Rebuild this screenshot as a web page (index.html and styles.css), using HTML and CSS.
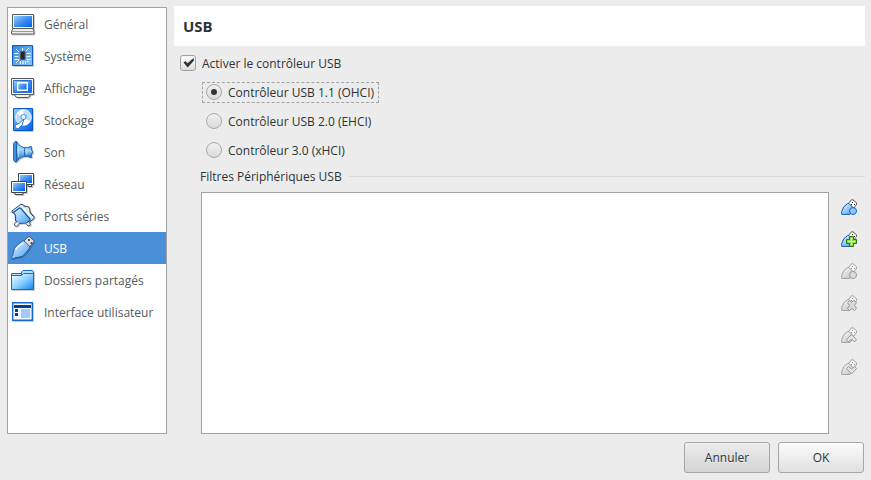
FILE: index.html
```html
<!DOCTYPE html>
<html lang="fr">
<head>
<meta charset="utf-8">
<title>Configuration</title>
<link rel="stylesheet" href="styles.css">
</head>
<body>
<svg class="defs" width="0" height="0" aria-hidden="true">
  <defs>
    <linearGradient id="screen" x1="0" y1="0" x2="1" y2="1"><stop offset="0" stop-color="#9bceff"/><stop offset=".5" stop-color="#3d8ff0"/><stop offset="1" stop-color="#0560ea"/></linearGradient>
    <linearGradient id="sky" x1="0" y1="0" x2="1" y2="1"><stop offset="0" stop-color="#e2f2ff"/><stop offset="1" stop-color="#4c9ff0"/></linearGradient>
    <linearGradient id="chip" x1="0" y1="0" x2="1" y2="1"><stop offset="0" stop-color="#2f86e0"/><stop offset="1" stop-color="#8cc8fa"/></linearGradient>
    <linearGradient id="folder" x1="0" y1="0" x2="1" y2="1"><stop offset="0" stop-color="#fff"/><stop offset=".5" stop-color="#8fd4ff"/><stop offset="1" stop-color="#0f82f0"/></linearGradient>
    <linearGradient id="horn" x1="0" y1="0" x2="0" y2="1"><stop offset="0" stop-color="#5aa3e6"/><stop offset=".4" stop-color="#a4d6fc"/><stop offset="1" stop-color="#0c5cb8"/></linearGradient>
    <linearGradient id="gray" x1="0" y1="0" x2="1" y2="1"><stop offset="0" stop-color="#f4f4f4"/><stop offset="1" stop-color="#c4c4c4"/></linearGradient>
    <g id="plug-blue">
      <path d="M7.500 4.500 10.500 .8h1.500l3.500 3v1.700l-3 4z" fill="#fff" stroke="#555"/>
      <path d="M11 3h1v1h-1zM13 5h1v1h-1zM10 5h1v1h-1z" fill="#222"/>
      <path d="M.7 15.400V12.500Q2 7 6.500 4.500h1.500l4.500 4.500v2.500l-3.500 3.900z" fill="url(#sky)" stroke="#1259ae"/>
    </g>
    <g id="plug-gray">
      <path d="M7.500 4.500 10.500 .8h1.500l3.500 3v1.700l-3 4z" fill="#f4f4f4" stroke="#a0a0a0"/>
      <path d="M11 3h1v1h-1zM13 5h1v1h-1zM10 5h1v1h-1z" fill="#888"/>
      <path d="M.7 15.400V12.500Q2 7 6.500 4.500h1.500l4.500 4.500v2.500l-3.500 3.900z" fill="url(#gray)" stroke="#a0a0a0"/>
    </g>
  </defs>
</svg>

<div class="dialog">
  <div class="content">
    <nav class="sidebar">
      <a class="item">
        <svg class="icon" viewBox="0 0 24 24"><path d="M1.500 2.500h21v14h-21z" fill="#f8f8f8" stroke="#555"/><path d="M3 4h18v11H3z" fill="url(#screen)"/><path d="M2 16.500h20l1 3v2.500H.5v-2.500z" fill="#f0eeec" stroke="#5c5955"/><path d="M1 19.500h21.500" stroke="#a09a94"/></svg>
        <span>Général</span></a>
      <a class="item">
        <svg class="icon" viewBox="0 0 24 24"><path d="M1.500 1.500h20v20h-20z" fill="url(#chip)" stroke="#1059b8"/><path d="M3.500 9.500h4m-4 3h4m-4 3h4m8-6h4m-4 3h4m-4 3h4M9.500 17v3m2.500-3v3m2.500-3v3M5 5l3 3M15 7l3-3M11.500 4v2.500M5 19l3-3M18 18l-2-1" stroke="#fff"/><path d="M9.500 7.500h4.500v8H9.500z" fill="#262626" stroke="#555"/></svg>
        <span>Système</span></a>
      <a class="item">
        <svg class="icon" viewBox="0 0 24 24"><path d="M.5 2.500h22v16H.5z" fill="#f4f4f4" stroke="#555"/><path d="M2.500 4.500h18v12h-18z" fill="url(#screen)" stroke="#2470d6"/><path d="M6.700 6.700h9.600v7.600H6.700z" fill="url(#screen)" stroke="#fff" stroke-width="1.400"/><path d="M4 18.500h15v1.500l-2 1.500H6L4 20z" fill="#eee" stroke="#5c5955"/></svg>
        <span>Affichage</span></a>
      <a class="item">
        <svg class="icon" viewBox="0 0 24 24"><path d="M2.500.5h19v22h-19z" fill="url(#screen)" stroke="#0757bd"/><circle cx="12.500" cy="9.500" r="7.800" fill="#b9dcfb" stroke="#e9f5ff"/><path d="M12.500 9.500 6 5.500a8 8 0 0 1 6.500-3.800zM12.500 9.500l6.500 4a8 8 0 0 1-6.500 3.800z" fill="#fff"/><circle cx="12.500" cy="9" r="2.600" fill="#eef7ff" stroke="#4a8fd2"/><path d="m13 11-2 6-3.500 3.500-3.500-.5.500-3 4-2z" fill="#fff" stroke="#2779cc" stroke-width=".9"/></svg>
        <span>Stockage</span></a>
      <a class="item">
        <svg class="icon" viewBox="0 0 24 24"><path d="M11.500 7.500h7v-1h2v4h1v3h-1v4h-2v-1h-7z" fill="url(#horn)" stroke="#1762b1" stroke-width=".8"/><path d="M5.500 1.500q1.500 4 8 6.500v8q-6.500 2.500-8 6z" fill="url(#horn)" stroke="#1461b4" stroke-width=".8"/><path d="M2.500 3.500 4 1.500h1.500v20.500H4L2.500 20z" fill="#3f8fdd" stroke="#1259a8" stroke-width=".8"/><path d="M7.500 6v11M16 8v7" stroke="#c9e7ff" opacity=".7"/></svg>
        <span>Son</span></a>
      <a class="item">
        <svg class="icon" viewBox="0 0 24 24"><path d="M7.500 1.500h15v11h-15z" fill="#fff" stroke="#444"/><path d="M9 3h12v8H9z" fill="url(#screen)"/><path d="M17 12.500h3l1 2h-4z" fill="#eee" stroke="#444"/><path d="M.5 9.500h15v11H.5z" fill="#fff" stroke="#444"/><path d="M2 11h12v8H2z" fill="url(#screen)"/><path d="M4 20.500h8v2H4z" fill="#eee" stroke="#444"/></svg>
        <span>Réseau</span></a>
      <a class="item">
        <svg class="icon" viewBox="0 0 24 24"><path d="M1 8.500V7l8.500-6.500H12L23 12.500v2L18.500 18H17L4 8z" fill="#d4eaff" stroke="#26476d"/><path d="M12.500 2 18 3l1.500 6 3 3.500" fill="#e8e8e8" stroke="#444"/><path d="m2.500 8.500 6-4.500 1.500.5 9 10.500v1.500l-3.500 2.500-8 .5-3-3v-5z" fill="url(#sky)" stroke="#0e59ac" stroke-width="1.200"/><path d="m6 17.500-2.500 2v2l2 1 3-2.500M15 19.500l2 2.500 2.500-1-1-3" fill="#eee" stroke="#555"/><path d="m12.500 4.500 8 8.500" stroke="#fff" stroke-width="1.300"/></svg>
        <span>Ports séries</span></a>
      <a class="item selected">
        <svg class="icon" viewBox="0 0 24 24"><path d="m12.500 5.500 4.500-4.500q1-.8 2 0l3.500 3.500q.8 1 0 2l-4.500 5z" fill="#e2e2e2" stroke="#54616e"/><path d="M17 3h2v2h-2zM19.500 6h2v2h-2z" fill="#555"/><path d="M.8 22.700V20.500q1.500-1.500 1.500-4 0-4 4-7.500l5-4q1.200-.6 2.500.5l4.500 4.500q1 1.300 0 2.500l-4 5q-3 3.800-7 3.800-3 0-5 1.400z" fill="url(#sky)" stroke="#195ca8"/><path d="M4.500 14q2-4 8-7" fill="none" stroke="#e9f6ff" stroke-width="1.600"/></svg>
        <span>USB</span></a>
      <a class="item">
        <svg class="icon" viewBox="0 0 24 24"><path d="M10.500 7V4L12 2.500h9.500l1 1.500v17H.5V5.500h10z" fill="#b4defd" stroke="#1370c8"/><path d="M.5 7.500h10l2-2h10v16H.5z" fill="url(#folder)" stroke="#0f6fca"/></svg>
        <span>Dossiers partagés</span></a>
      <a class="item">
        <svg class="icon" viewBox="0 0 24 24"><path d="M1.700 2.700h19.600v17.600H1.700z" fill="#f7fbff" stroke="#1369cf" stroke-width="1.400"/><path d="M3 5h17v3H3z" fill="#053e95"/><path d="M10 9h9v9h-9z" fill="#9fc9ff"/><path d="M4 9h3v3H4zM4 13h3v3H4z" fill="#053e95"/></svg>
        <span>Interface utilisateur</span></a>
    </nav>

    <main class="page">
      <h1 class="title">USB</h1>
      <label class="enable"><span class="checkbox"><svg viewBox="0 0 14 14"><path d="M2.500 6.500 4.500 5l2 2.200L12.500 2l.5 2.500-6.300 7z" fill="#2e3436"/></svg></span>Activer le contrôleur USB</label>
      <div class="radios">
        <label class="option focused"><span class="radio checked"></span>Contrôleur USB 1.1 (OHCI)</label>
        <label class="option"><span class="radio"></span>Contrôleur USB 2.0 (EHCI)</label>
        <label class="option"><span class="radio"></span>Contrôleur 3.0 (xHCI)</label>
      </div>
      <h2 class="group"><span>Filtres Périphériques USB</span></h2>
      <div class="filters">
        <div class="list"></div>
        <div class="tools">
          <svg viewBox="0 0 16 16"><use href="#plug-blue"/><circle cx="12" cy="12" r="3.500" fill="#91c6fb" stroke="#1766ca"/></svg>
          <svg viewBox="0 0 16 16"><use href="#plug-blue"/><path d="M8.500 5.500h4v3h3v4h-3v3h-4v-3h-3v-4h3z" fill="#8edb50" stroke="#25780b"/><path d="M10.500 7v7M7 10.500h7" stroke="#d6ffab"/></svg>
          <svg viewBox="0 0 16 16"><use href="#plug-gray"/><circle cx="12" cy="12" r="3.500" fill="#dedede" stroke="#999"/></svg>
          <svg viewBox="0 0 16 16"><use href="#plug-gray"/><path d="m6.500 7.500 2-2 2 2 2-2 3 2-2 3 2 3-2 2-3-2-2 2-2-2 2-3z" fill="#d8d8d8" stroke="#999"/></svg>
          <svg viewBox="0 0 16 16"><use href="#plug-gray"/><path d="m5.500 12.500 5-5 5 5-2 2.500-3-3-3 3z" fill="#e2e2e2" stroke="#999"/></svg>
          <svg viewBox="0 0 16 16"><use href="#plug-gray"/><path d="m5.500 9.500 2-2 3 2.500 3-2.500 2 2-5 5.500z" fill="#e2e2e2" stroke="#999"/></svg>
        </div>
      </div>
    </main>
  </div>
  <footer class="buttons">
    <button class="button cancel">Annuler</button>
    <button class="button">OK</button>
  </footer>
</div>
</body>
</html>
```
FILE: styles.css
```css
* { box-sizing: border-box; }
body {
  margin: 0;
  background: #ececec;
  color: #2e3436;
  font: 12px/16px "Open Sans", "Noto Sans", sans-serif;
}
.defs { display: block; }
.dialog {
  width: 871px;
  height: 480px;
  padding: 6px 6px 7px 7px;
  display: flex;
  flex-direction: column;
}
.content { display: flex; gap: 7px; height: 428px; }
.sidebar {
  width: 160px;
  margin-top: 1px;
  background: #fff;
  border: 1px solid #a2a2a2;
}
.item {
  height: 32px;
  padding-left: 3px;
  display: flex;
  align-items: center;
  gap: 9px;
  color: #555a5c;
  white-space: nowrap;
}
.item span { padding-top: 2px; }
.item.selected { background: #4a90d9; color: #fff; }
.icon { width: 24px; height: 24px; flex: none; filter: drop-shadow(1px 1px .5px #0003); }
.page { flex: 1; display: flex; flex-direction: column; }
.title {
  margin: 0;
  height: 40px;
  padding-left: 9px;
  background: #fff;
  font-size: 15px;
  line-height: 41px;
}
.enable { display: flex; align-items: center; gap: 6px; height: 18px; line-height: 18px; margin: 9px 0 0 6px; }
.checkbox {
  width: 16px;
  height: 16px;
  margin-bottom: 2px;
  border: 1px solid #a0a0a0;
  border-radius: 3px;
  background: linear-gradient(#fff, #ddd);
}
.checkbox svg { display: block; width: 14px; height: 14px; }
.radios { display: flex; flex-direction: column; align-items: flex-start; gap: 8px; margin: 9px 0 0 28px; }
.option { display: flex; align-items: center; gap: 6px; height: 21px; padding: 0 4px 0 3px; border: 1px solid transparent; white-space: nowrap; }
.option.focused { border: 1px dashed #a2a2a2; }
.radio {
  display: grid;
  place-items: center;
  width: 16px;
  height: 16px;
  margin-bottom: 1px;
  border: 1px solid #a8a8a8;
  border-radius: 50%;
  background: linear-gradient(#f0f0f0, #dadada);
}
.checked::after { content: ""; width: 6px; height: 6px; border-radius: 50%; background: #2e3436; }
.group {
  display: flex;
  align-items: center;
  gap: 7px;
  height: 16px;
  line-height: 16px;
  margin: 7px 0 0 26px;
  font-size: 12px;
  font-weight: 400;
}
.group span { padding-top: 2px; }
.group::after { content: ""; flex: 1; height: 1px; background: #d9d9d9; }
.filters { display: flex; flex: 1; margin: 8px 8px 0 27px; gap: 12px; }
.list { flex: 1; background: #fff; border: 1px solid #a2a2a2; }
.tools { display: flex; flex-direction: column; gap: 16px; padding-top: 7px; width: 16px; }
.tools svg { display: block; width: 16px; height: 16px; flex: none; }
.buttons { display: flex; justify-content: flex-end; gap: 8px; margin: 8px 1px 0 0; }
.button {
  width: 86px;
  height: 31px;
  padding: 0;
  border: 1px solid #a5a5a5;
  border-radius: 3px;
  background: linear-gradient(#fbfbfb, #e0e0e0);
  box-shadow: inset 0 1px #fff;
  color: #2e3436;
  font: inherit;
}
.button.cancel { background: linear-gradient(#ececec, #d4d4d4); box-shadow: inset 0 1px #f5f5f5; text-shadow: 0 1px #fff8; }
```
